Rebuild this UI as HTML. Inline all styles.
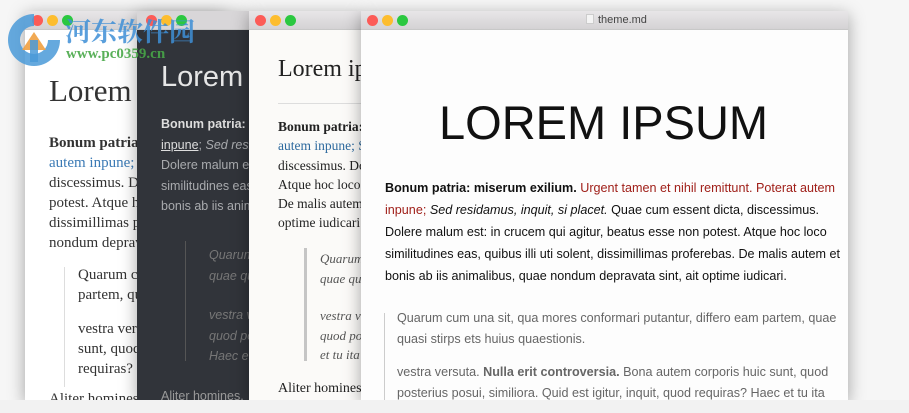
<!DOCTYPE html>
<html><head><meta charset="utf-8"><style>
*{margin:0;padding:0;box-sizing:border-box}
body{width:909px;height:413px;overflow:hidden;background:#f6f6f6;position:relative;font-family:"Liberation Sans",sans-serif}
.win{position:absolute;top:11px;overflow:hidden;box-shadow:0 4px 16px rgba(0,0,0,.35)}
.tb{height:19px;background:linear-gradient(#e8e6e8,#d4d2d4);border-bottom:1px solid #c8c8c8;position:relative}
.d{position:absolute;top:4px;width:11px;height:11px;border-radius:50%}
.r{background:#fc5b57;left:7px}.y{background:#fdbd2e;left:22px}.g{background:#2bc840;left:37px}
.t{position:absolute;white-space:nowrap}
.serif{font-family:"Liberation Serif",serif}
</style></head><body>

<!-- window 1 -->
<div class="win" style="left:25px;width:200px;height:389px;background:#fff">
<div class="tb"><div class="d r"></div><div class="d y"></div><div class="d g"></div></div>
<div class="serif" style="color:#333">
<div class="t" style="left:24px;top:62px;font-size:31px">Lorem ipsum</div>
<div style="position:absolute;left:24px;top:122px;font-size:15px;line-height:20px;width:300px">
<b>Bonum patria: miserum</b><br><span style="color:#3b7ab5">autem inpune; Sed</span><br>discessimus. Dolere<br>potest. Atque hoc loco<br>dissimillimas proferebas<br>nondum depravata sint</div>
<div style="position:absolute;left:39px;top:256px;width:1px;height:120px;background:#ddd"></div>
<div style="position:absolute;left:53px;top:254px;font-size:15px;line-height:20px;width:300px">Quarum cum una<br>partem, quae quasi<div style="height:14px"></div>vestra versuta. Nulla<br>sunt, quod posterius<br>requiras? Haec</div>
<div class="t" style="left:24px;top:380px;font-size:15px">Aliter homines</div>
</div></div>

<!-- window 2 dark -->
<div class="win" style="left:137px;width:112px;height:389px;background:#31343a">
<div class="tb" style="background:#d8d6d8"><div class="d r" style="left:9px"></div><div class="d y" style="left:24px"></div><div class="d g" style="left:39px"></div></div>
<div class="t" style="left:24px;top:50px;font-size:29px;color:#e6e6e6;font-weight:300">Lorem ipsum</div>
<div style="position:absolute;left:24px;top:103px;font-size:12.5px;line-height:20.5px;color:#a9abae;width:300px;white-space:nowrap">
<b style="color:#ddd">Bonum patria: miserum</b><br><u style="color:#ddd">inpune</u>; <i>Sed residamus</i><br>Dolere malum est<br>similitudines eas<br>bonis ab iis animalibus</div>
<div style="position:absolute;left:48px;top:230px;width:1px;height:120px;background:#555"></div>
<div style="position:absolute;left:72px;top:234px;font-size:12.5px;line-height:20.5px;color:#777;font-style:italic;white-space:nowrap">Quarum cum<br>quae quasi<div style="height:19px"></div>vestra versuta<br>quod posterius<br>Haec et tu</div>
<div class="t" style="left:24px;top:378px;font-size:12.5px;color:#999">Aliter homines,</div>
</div>

<!-- window 3 -->
<div class="win" style="left:249px;width:113px;height:389px;background:#fbfaf8">
<div class="tb"><div class="d r" style="left:6px"></div><div class="d y" style="left:21px"></div><div class="d g" style="left:36px"></div></div>
<div class="serif" style="color:#222">
<div class="t" style="left:29px;top:45px;font-size:24px">Lorem ipsum</div>
<div style="position:absolute;left:29px;top:92px;width:100px;height:1px;background:#ddd"></div>
<div style="position:absolute;left:29px;top:106px;font-size:13.5px;line-height:19.3px;width:300px;white-space:nowrap">
<b>Bonum patria: miserum</b><br><span style="color:#2e6a9e">autem inpune; Sed</span><br>discessimus. Dolere<br>Atque hoc loco<br>De malis autem et<br>optime iudicari.</div>
<div style="position:absolute;left:55px;top:237px;width:3px;height:113px;background:#c5c5c5"></div>
<div style="position:absolute;left:71px;top:238px;font-size:13px;line-height:19.5px;font-style:italic;color:#555;white-space:nowrap">Quarum cum<br>quae quasi<div style="height:18px"></div>vestra versuta<br>quod posterius<br>et tu ita</div>
<div class="t" style="left:29px;top:370px;font-size:14px">Aliter homines</div>
</div></div>

<!-- window 4 -->
<div class="win" style="left:361px;width:487px;height:389px;background:#fdfdfd">
<div class="tb"><div class="d r" style="left:6px"></div><div class="d y" style="left:21px"></div><div class="d g" style="left:36px"></div>
<div class="t" style="left:225px;top:3px;font-size:11px;color:#444"><span style="display:inline-block;width:8px;height:10px;background:#f4f4f4;border:1px solid #ccc;vertical-align:-1px;margin-right:4px"></span>theme.md</div></div>
<div class="t" style="left:78px;top:84px;font-size:47px;color:#111">LOREM IPSUM</div>
<div style="position:absolute;left:24px;top:166px;font-size:12.6px;line-height:22px;color:#111;width:460px">
<b>Bonum patria: miserum exilium.</b> <span style="color:#a0201a">Urgent tamen et nihil remittunt. Poterat autem inpune;</span> <i>Sed residamus, inquit, si placet.</i> Quae cum essent dicta, discessimus. Dolere malum est: in crucem qui agitur, beatus esse non potest. Atque hoc loco similitudines eas, quibus illi uti solent, dissimillimas proferebas. De malis autem et bonis ab iis animalibus, quae nondum depravata sint, ait optime iudicari.</div>
<div style="position:absolute;left:23px;top:302px;width:1px;height:100px;background:#ccc"></div>
<div style="position:absolute;left:36px;top:297px;font-size:12.6px;line-height:20.5px;color:#666;width:445px">Quarum cum una sit, qua mores conformari putantur, differo eam partem, quae quasi stirps ets huius quaestionis.<div style="height:13px"></div>vestra versuta. <b>Nulla erit controversia.</b> Bona autem corporis huic sunt, quod posterius posui, similiora. Quid est igitur, inquit, quod requiras? Haec et tu ita</div>
</div>

<div style="position:absolute;left:0;top:400px;width:909px;height:13px;background:#f2f2f2"></div>

<!-- watermark -->
<svg style="position:absolute;left:4px;top:10px" width="60" height="58" viewBox="0 0 60 58">
<path d="M30 4 A26 26 0 1 0 56 30 L44 30 A14 14 0 1 1 30 16 Z" fill="#4a9ad8" opacity=".85"/>
<path d="M18 40 L30 22 L42 40 Z" fill="#f0a040" opacity=".9"/>
<rect x="26" y="30" width="8" height="22" fill="#4a9ad8" opacity=".85"/>
</svg>
<div class="t" style="left:65px;top:12px;font-size:26px;font-weight:bold;color:#3e8fd6;opacity:.85;font-family:'Liberation Serif','Noto Serif CJK SC',serif">河东软件园</div>
<div class="t" style="left:66px;top:46px;font-size:15px;font-weight:bold;color:#48a848;opacity:.9;font-family:'Liberation Serif',serif">www.pc0359.cn</div>
</body></html>
